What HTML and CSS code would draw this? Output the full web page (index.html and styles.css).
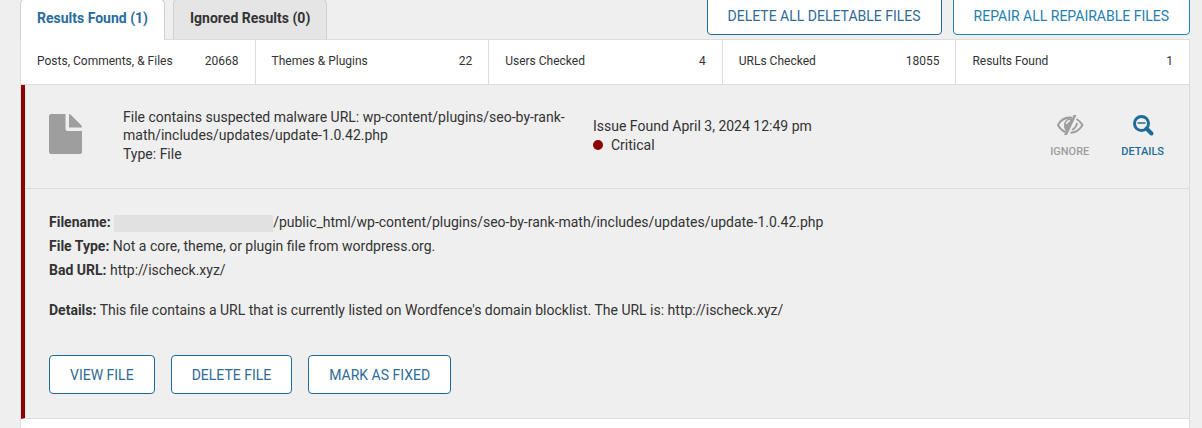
FILE: index.html
```html
<!DOCTYPE html>
<html lang="en">
<head>
    <meta charset="UTF-8">
    <meta name="viewport" content="width=device-width, initial-scale=1.0">
    <title>Scan Results</title>
    <link rel="stylesheet" href="styles.css">
</head>
<body>

    <!-- Tabs and bulk actions -->
    <header class="scan-header">
        <nav class="tabs">
            <a class="tab active" href="#results">Results Found (1)</a>
            <a class="tab" href="#ignored">Ignored Results (0)</a>
        </nav>
        <div class="bulk-actions">
            <button class="btn" type="button">DELETE ALL DELETABLE FILES</button>
            <button class="btn btn-light" type="button">REPAIR ALL REPAIRABLE FILES</button>
        </div>
    </header>

    <main class="results" id="results">
        <!-- Scan totals -->
        <ul class="stats">
            <li><span>Posts, Comments, &amp; Files</span><span>20668</span></li>
            <li><span>Themes &amp; Plugins</span><span>22</span></li>
            <li><span>Users Checked</span><span>4</span></li>
            <li><span>URLs Checked</span><span>18055</span></li>
            <li><span>Results Found</span><span>1</span></li>
        </ul>

        <!-- Issue -->
        <section class="issue">
            <div class="issue-summary">
                <svg class="file-icon" viewBox="0 0 33 40" aria-hidden="true">
                    <path d="M2 0H16.500V15Q16.500 17 18.500 17H33V38Q33 40 31 40H2Q0 40 0 38V2Q0 0 2 0Z"/>
                    <path d="M20 0Q21 0 22 1L32 11Q33 12 33 13.500H20Z"/>
                </svg>
                <div class="issue-text">
                    <p>File contains suspected malware URL: wp-content/plugins/seo-by-rank-math/includes/updates/update-1.0.42.php</p>
                    <p>Type: File</p>
                </div>
                <div class="issue-date">
                    <p>Issue Found April 3, 2024 12:49 pm</p>
                    <p class="severity">Critical</p>
                </div>
                <div class="issue-controls">
                    <button class="control" type="button">
                        <svg viewBox="0 0 28 24" aria-hidden="true">
                            <g fill="none" stroke="currentColor" stroke-width="2">
                                <path d="M16 4.800Q6.500 3.500 2 12Q5 17.500 9.500 19"/>
                                <path d="M20.500 6Q24.500 8.500 26.500 12Q22 19.500 14.500 19.800"/>
                                <path d="M21 10Q20.500 14.500 16 17"/>
                            </g>
                            <path fill="currentColor" d="M17.500 2H20.500L11 22H8L9.800 18Q7.500 15 8 11Q9 6 14 5.500H16Z"/>
                            <path d="M10.500 11Q11 8 14 7.500" fill="none" stroke="#efefef" stroke-width="1.500"/>
                        </svg>
                        IGNORE
                    </button>
                    <button class="control details" type="button">
                        <svg viewBox="0 0 28 24" aria-hidden="true">
                            <g fill="none" stroke="currentColor">
                                <circle cx="12.500" cy="10.500" r="7" stroke-width="3"/>
                                <path d="M17.500 15.500L22.500 20.500" stroke-width="4" stroke-linecap="round"/>
                                <path d="M8.500 10H16.500" stroke-width="1.500"/>
                            </g>
                        </svg>
                        DETAILS
                    </button>
                </div>
            </div>

            <div class="issue-details">
                <p><strong>Filename:</strong> <span class="redacted"></span>/public_html/wp-content/plugins/seo-by-rank-math/includes/updates/update-1.0.42.php</p>
                <p><strong>File Type:</strong> Not a core, theme, or plugin file from wordpress.org.</p>
                <p><strong>Bad URL:</strong> http://ischeck.xyz/</p>
                <p class="description"><strong>Details:</strong> This file contains a URL that is currently listed on Wordfence's domain blocklist. The URL is: http://ischeck.xyz/</p>
                <div class="issue-actions">
                    <button class="btn" type="button">VIEW FILE</button>
                    <button class="btn" type="button">DELETE FILE</button>
                    <button class="btn" type="button">MARK AS FIXED</button>
                </div>
            </div>
        </section>
    </main>

</body>
</html>
```

FILE: styles.css
```css
* {
    box-sizing: border-box;
}

body {
    display: flex;
    flex-direction: column;
    min-height: 100vh;
    margin: 0;
    padding: 0 12px 0 20px;
    background-color: #efefef;
    color: #333;
    font-family: Roboto, sans-serif;
    font-size: 14px;
    line-height: 18px;
}

p {
    margin: 0;
}

.scan-header {
    display: flex;
    justify-content: space-between;
    margin-top: -4px;
}

.tabs {
    display: flex;
    align-items: flex-end;
    gap: 8px;
}

.tab {
    padding: 10px 16px 12px;
    border: 1px solid #d0d0d0;
    border-bottom: 0;
    border-radius: 6px 6px 0 0;
    background-color: #e5e5e5;
    color: #333;
    font-weight: 700;
    text-decoration: none;
}

.tab.active {
    position: relative;
    margin-bottom: -1px;
    padding-bottom: 13px;
    background-color: #fff;
    color: #2a6d9b;
}

.bulk-actions {
    display: flex;
    gap: 11px;
    padding-bottom: 4px;
}

.btn {
    height: 39px;
    padding: 0 20px;
    border: 1px solid #1f6d96;
    border-radius: 4px;
    background-color: #fff;
    color: #2f6b96;
    font: inherit;
    cursor: pointer;
}

.btn-light {
    border-color: #1f84ae;
    color: #2480b0;
}

.results {
    flex: 1;
    border: 1px solid #dcdcdc;
    border-bottom: 0;
    background-color: #fff;
}

.stats {
    display: grid;
    grid-template-columns: repeat(5, 1fr);
    margin: 0;
    padding: 0;
    border-bottom: 1px solid #dcdcdc;
    font-size: 12px;
    list-style: none;
}

.stats li {
    display: flex;
    justify-content: space-between;
    padding: 12px 16px 14px;
}

.stats li + li {
    border-left: 1px solid #dcdcdc;
}

.issue {
    border-bottom: 1px solid #dcdcdc;
    border-left: 4px solid #8b0000;
    background-color: #efefef;
}

.issue-summary {
    display: grid;
    grid-template-columns: 33px 450px 1fr auto;
    align-items: center;
    padding: 23px 17px 25px 24px;
    border-bottom: 1px solid #dcdcdc;
}

.file-icon {
    align-self: start;
    width: 33px;
    height: 40px;
    margin-top: 6px;
    fill: #9e9e9e;
}

.issue-text {
    margin-left: 41px;
    margin-right: -41px;
}

.issue-date {
    margin-left: 61px;
}

.issue-text p + p,
.issue-date p + p {
    margin-top: 1px;
}

.severity {
    display: flex;
    align-items: center;
    gap: 8px;
}

.severity::before {
    width: 10px;
    height: 10px;
    border-radius: 50%;
    background-color: #8b0000;
    content: "";
}

.issue-controls {
    display: flex;
    gap: 16px;
}

.control {
    display: flex;
    flex-direction: column;
    align-items: center;
    gap: 8px;
    padding: 0 8px;
    border: 0;
    background: none;
    color: #9e9e9e;
    font: 500 11px/14px Roboto, sans-serif;
    cursor: pointer;
}

.control svg {
    width: 28px;
    height: 24px;
}

.control.details {
    color: #1f6d96;
}

.issue-details {
    padding: 21px 24px 24px;
    line-height: 24px;
}

.redacted {
    display: inline-block;
    width: 159px;
    height: 17px;
    background-color: #e1e1e1;
    vertical-align: middle;
}

.description {
    margin-top: 16px;
}

.issue-actions {
    display: flex;
    gap: 16px;
    margin-top: 33px;
}
```
